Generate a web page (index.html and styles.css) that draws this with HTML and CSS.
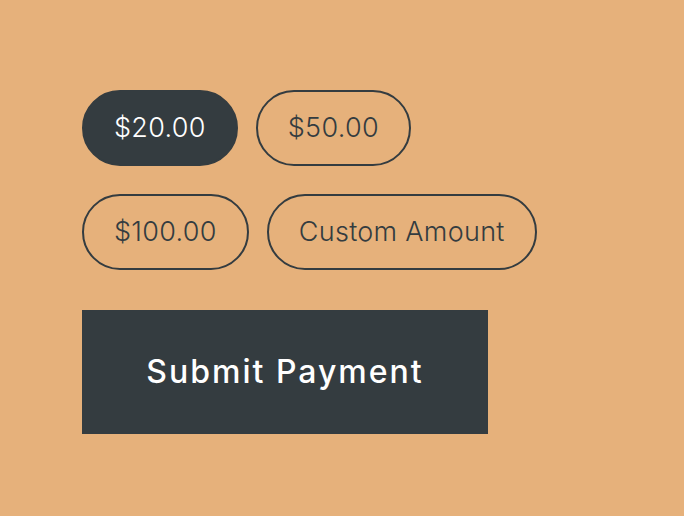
FILE: index.html
```html
<!DOCTYPE html>
<html>
<head>
    <title>Donate</title>
    <meta name="viewport" content="width=device-width, initial-scale=1.0">
    <link rel="stylesheet" href="styles.css">
</head>
<body>
    <div class="donate">
        <div class="amounts">
            <button class="amount selected">$20.00</button>
            <button class="amount">$50.00</button>
        </div>
        <div class="amounts">
            <button class="amount">$100.00</button>
            <button class="amount">Custom Amount</button>
        </div>
        <button class="submit">Submit Payment</button>
    </div>
</body>
</html>
```

FILE: styles.css
```css
* {
    box-sizing: border-box;
    margin: 0;
    padding: 0;
}

body {
    font-family: Inter, "Open Sans", sans-serif;
    background-color: #e6b17b;
    min-height: 100vh;
}

.donate {
    padding: 90px 82px;
    display: flex;
    flex-direction: column;
    align-items: flex-start;
    gap: 28px;
}

.amounts {
    display: flex;
    gap: 18px;
}

.amount {
    height: 76px;
    padding: 0 30px 2px;
    border: 2px solid #343c40;
    border-radius: 38px;
    background: none;
    color: #343c40;
    font-family: inherit;
    font-size: 27px;
    font-weight: 300;
    letter-spacing: 0.3px;
    cursor: pointer;
}

.amount.selected {
    background-color: #343c40;
    color: white;
}

.submit {
    width: 406px;
    height: 124px;
    margin-top: 12px;
    padding-bottom: 2px;
    border: none;
    background-color: #343c40;
    color: white;
    font-family: inherit;
    font-size: 32px;
    font-weight: 500;
    letter-spacing: 2px;
    cursor: pointer;
}
```
